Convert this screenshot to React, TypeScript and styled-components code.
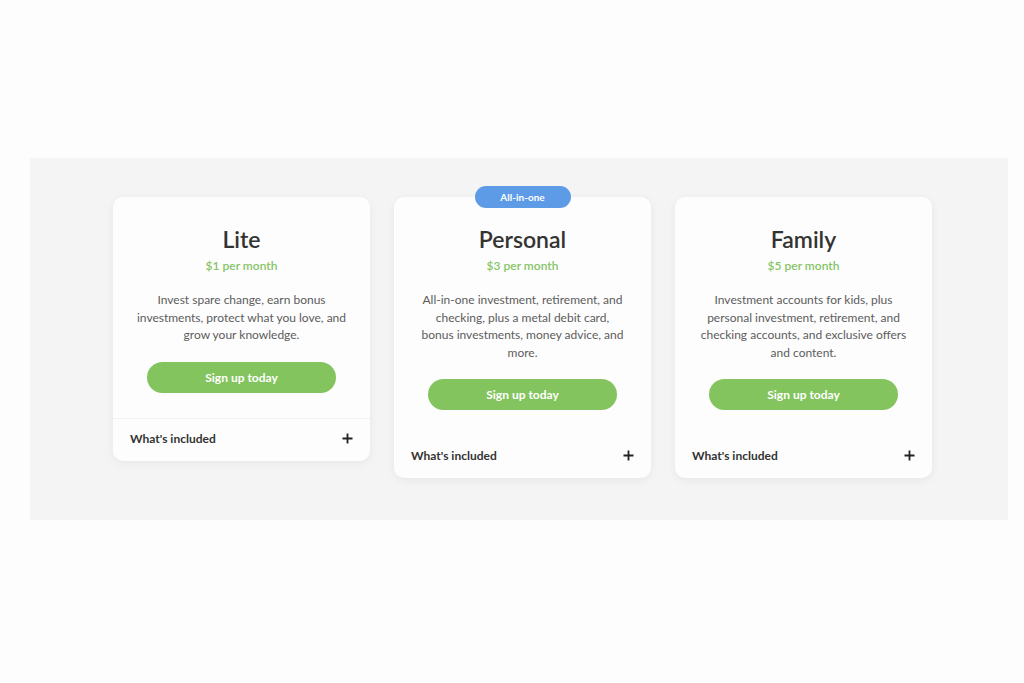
import React from 'react';
import styled, { createGlobalStyle } from 'styled-components';

const GlobalStyle = createGlobalStyle`
  body {
    margin: 0;
    background: #fdfdfd;
    font-family: Lato, "Open Sans", Arial, sans-serif;
  }
`;

const Page = styled.div`
  width: 1024px;
  height: 683px;
  padding: 158px 16px 0 30px;
  box-sizing: border-box;
  background: #fdfdfd;
`;

const Panel = styled.section`
  background: #f4f4f4;
  height: 362px;
  box-sizing: border-box;
  padding: 39px 0 0 83px;
  display: flex;
  align-items: flex-start;
  gap: 24px;
`;

const Card = styled.div`
  position: relative;
  width: 257px;
  background: #fdfdfd;
  border-radius: 10px;
  box-shadow: 0 2px 8px rgba(0, 0, 0, 0.06);
  display: flex;
  flex-direction: column;
`;

const Badge = styled.div`
  position: absolute;
  top: -11px;
  left: 50%;
  transform: translateX(-50%);
  width: 96px;
  height: 22px;
  border-radius: 11px;
  background: #5d9be6;
  color: #fff;
  font-size: 10px;
  font-weight: 700;
  display: flex;
  align-items: center;
  justify-content: center;
`;

const Body = styled.div`
  padding: 28px 20px 25px;
  display: flex;
  flex-direction: column;
  align-items: center;
  text-align: center;
`;

const Title = styled.h2`
  margin: 0;
  font-size: 23px;
  line-height: 28px;
  font-weight: 600;
  color: #333;
`;

const Price = styled.div`
  margin-top: 5px;
  font-size: 12px;
  line-height: 16px;
  color: #86c466;
  font-weight: 600;
`;

const Description = styled.p<{ $width: number }>`
  margin: 17px 0 0;
  max-width: ${p => p.$width}px;
  font-size: 12px;
  line-height: 17.5px;
  color: #5c5c5c;
`;

const SignUp = styled.button`
  margin-top: 18px;
  width: 189px;
  height: 31px;
  border: none;
  border-radius: 16px;
  background: #83c45e;
  color: #fff;
  font-family: inherit;
  font-size: 12px;
  font-weight: 700;
  cursor: pointer;
`;

const Footer = styled.div<{ $divider: boolean }>`
  height: 43px;
  box-sizing: border-box;
  padding: 0 17px 3px;
  display: flex;
  align-items: center;
  justify-content: space-between;
  border-top: 1px solid ${p => (p.$divider ? '#f1f1f1' : 'transparent')};
  font-size: 12px;
  font-weight: 700;
  color: #333;
`;

const Plus = () => (
  <svg width="11" height="11" viewBox="0 0 11 11">
    <path d="M5.5 0.5v10M0.5 5.5h10" stroke="#222" strokeWidth="1.8" />
  </svg>
);

const plans = [
  {
    name: 'Lite',
    price: '$1 per month',
    text: 'Invest spare change, earn bonus investments, protect what you love, and grow your knowledge.',
    badge: '',
    width: 212,
  },
  {
    name: 'Personal',
    price: '$3 per month',
    text: 'All-in-one investment, retirement, and checking, plus a metal debit card, bonus investments, money advice, and more.',
    badge: 'All-in-one',
    width: 205,
  },
  {
    name: 'Family',
    price: '$5 per month',
    text: 'Investment accounts for kids, plus personal investment, retirement, and checking accounts, and exclusive offers and content.',
    badge: '',
    width: 212,
  },
];

export default function App() {
  return (
    <>
      <GlobalStyle />
      <Page>
        <Panel>
          {plans.map(plan => (
            <Card key={plan.name}>
              {plan.badge && <Badge>{plan.badge}</Badge>}
              <Body>
                <Title>{plan.name}</Title>
                <Price>{plan.price}</Price>
                <Description $width={plan.width}>{plan.text}</Description>
                <SignUp>Sign up today</SignUp>
              </Body>
              <Footer $divider={plan.name === 'Lite'}>
                <span>What's included</span>
                <Plus />
              </Footer>
            </Card>
          ))}
        </Panel>
      </Page>
    </>
  );
}
